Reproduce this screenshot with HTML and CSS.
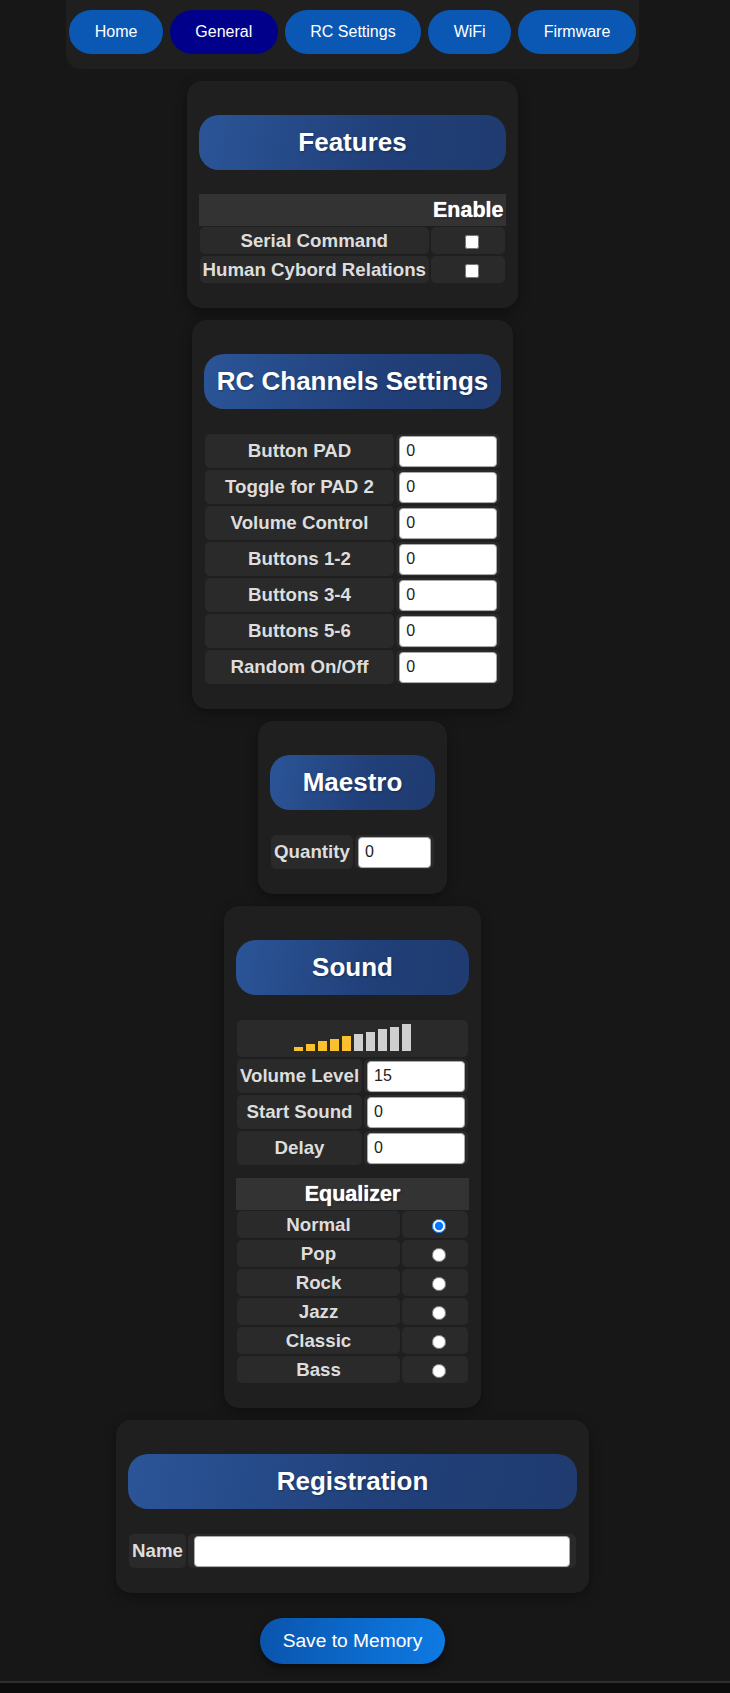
FILE: index.html
```html
<!DOCTYPE html>
<html lang="en">
<head>
<meta charset="utf-8">
<title>General</title>
<link rel="stylesheet" href="styles.css">
</head>
<body>
<div class="page">
  <nav class="nav">
    <a class="nav-btn" href="#">Home</a>
    <a class="nav-btn active" href="#">General</a>
    <a class="nav-btn" href="#">RC Settings</a>
    <a class="nav-btn" href="#">WiFi</a>
    <a class="nav-btn" href="#">Firmware</a>
  </nav>

  <section class="card">
    <h2 class="card-title">Features</h2>
    <table class="tbl">
      <tr><th></th><th>Enable</th></tr>
      <tr><td>Serial Command</td><td><input type="checkbox"></td></tr>
      <tr><td>Human Cybord Relations</td><td><input type="checkbox"></td></tr>
    </table>
  </section>

  <section class="card">
    <h2 class="card-title">RC Channels Settings</h2>
    <table class="tbl">
      <tr><td>Button PAD</td><td class="in-cell"><input class="num" type="text" value="0"></td></tr>
      <tr><td>Toggle for PAD 2</td><td class="in-cell"><input class="num" type="text" value="0"></td></tr>
      <tr><td>Volume Control</td><td class="in-cell"><input class="num" type="text" value="0"></td></tr>
      <tr><td>Buttons 1-2</td><td class="in-cell"><input class="num" type="text" value="0"></td></tr>
      <tr><td>Buttons 3-4</td><td class="in-cell"><input class="num" type="text" value="0"></td></tr>
      <tr><td>Buttons 5-6</td><td class="in-cell"><input class="num" type="text" value="0"></td></tr>
      <tr><td>Random On/Off</td><td class="in-cell"><input class="num" type="text" value="0"></td></tr>
    </table>
  </section>

  <section class="card">
    <h2 class="card-title">Maestro</h2>
    <table class="tbl">
      <tr><td>Quantity</td><td><input class="num num-sm" type="text" value="0"></td></tr>
    </table>
  </section>

  <section class="card">
    <h2 class="card-title">Sound</h2>
    <table class="tbl">
      <tr>
        <td colspan="2" class="bars-cell">
          <div class="bars">
            <span class="bar on" style="height:4px"></span>
            <span class="bar on" style="height:7px"></span>
            <span class="bar on" style="height:10px"></span>
            <span class="bar on" style="height:12px"></span>
            <span class="bar on" style="height:15px"></span>
            <span class="bar" style="height:17px"></span>
            <span class="bar" style="height:19px"></span>
            <span class="bar" style="height:22px"></span>
            <span class="bar" style="height:24px"></span>
            <span class="bar" style="height:27px"></span>
          </div>
        </td>
      </tr>
      <tr><td>Volume Level</td><td><input class="num" type="text" value="15"></td></tr>
      <tr><td>Start Sound</td><td><input class="num" type="text" value="0"></td></tr>
      <tr><td>Delay</td><td><input class="num" type="text" value="0"></td></tr>
    </table>
    <table class="tbl">
      <tr><th colspan="2">Equalizer</th></tr>
      <tr><td>Normal</td><td class="radio-cell"><input type="radio" name="eq" checked></td></tr>
      <tr><td>Pop</td><td class="radio-cell"><input type="radio" name="eq"></td></tr>
      <tr><td>Rock</td><td class="radio-cell"><input type="radio" name="eq"></td></tr>
      <tr><td>Jazz</td><td class="radio-cell"><input type="radio" name="eq"></td></tr>
      <tr><td>Classic</td><td class="radio-cell"><input type="radio" name="eq"></td></tr>
      <tr><td>Bass</td><td class="radio-cell"><input type="radio" name="eq"></td></tr>
    </table>
  </section>

  <section class="card">
    <h2 class="card-title">Registration</h2>
    <table class="tbl">
      <tr><td>Name</td><td class="wide-cell"><input class="num num-wide" type="text" value=""></td></tr>
    </table>
  </section>

  <button class="save-btn" type="button">Save to Memory</button>
</div>
<div class="footer"></div>
</body>
</html>
```

FILE: styles.css
```css
html {
  background: #0c0c0c;
}

body {
  margin: 0;
  background: #171717;
  font-family: "Liberation Sans", Arial, sans-serif;
  color: #ddd;
}

.page {
  width: 705px;
  display: flex;
  flex-direction: column;
  align-items: center;
  gap: 12px;
}

/* Navigation */
.nav {
  display: flex;
  gap: 7px;
  padding: 10px 3px 15px;
  background: #1f1f1f;
  border-radius: 0 0 15px 15px;
}

.nav-btn {
  display: block;
  padding: 13px 25.5px;
  font-size: 16px;
  line-height: 18px;
  color: #fff;
  text-decoration: none;
  background: #0a58b3;
  border-radius: 22px;
  white-space: nowrap;
}

.nav-btn.active {
  background: #00008b;
}

/* Cards */
.card {
  background: #1f1f1f;
  border-radius: 15px;
  padding: 12px;
  box-shadow: 0 4px 12px rgba(0, 0, 0, 0.35);
}

.card-title {
  margin: 22px 0 24px;
  padding: 12px 13px;
  font-size: 26px;
  line-height: 31px;
  font-weight: bold;
  color: #fff;
  text-align: center;
  white-space: nowrap;
  border-radius: 20px;
  background: linear-gradient(100deg, #2b5598 0%, #213f78 60%, #1f3b70 100%);
  text-shadow: 1px 1px 2px rgba(0, 0, 0, 0.3);
}

/* Tables */
.tbl {
  width: 100%;
  border-collapse: separate;
  border-spacing: 0;
  margin-bottom: 12px;
}

.tbl th {
  background: #333;
  padding: 3px;
  font-size: 21.5px;
  line-height: 26px;
  font-weight: bold;
  color: #fff;
  text-align: center;
  text-shadow: 0 0 1px #fff, 1px 1px 2px rgba(0, 0, 0, 0.5);
}

.tbl td {
  background: #2a2a2a;
  background-clip: padding-box;
  border: 1px solid transparent;
  border-radius: 6px;
  padding: 1.5px 3px;
  font-size: 18.72px;
  line-height: 24px;
  font-weight: bold;
  color: #ddd;
  text-align: center;
  white-space: nowrap;
  vertical-align: middle;
}

.tbl td.in-cell {
  width: 1%;
}

.tbl td.radio-cell {
  width: 60px;
}

.tbl td.wide-cell {
  padding: 1.5px 6px;
}

.num {
  box-sizing: border-box;
  width: 98px;
  height: 31px;
  margin: 0;
  padding: 0 6px;
  border: 1px solid #a9a9a9;
  border-radius: 4px;
  background: #fff;
  color: #222;
  font-family: "Liberation Sans", Arial, sans-serif;
  font-size: 16px;
  vertical-align: middle;
}

.num-sm {
  width: 73px;
}

.num-wide {
  width: 376px;
}

input[type="checkbox"],
input[type="radio"] {
  width: 14px;
  height: 14px;
  margin: 3px 3px 3px 11px;
  vertical-align: middle;
}

/* Volume bars */
.tbl td.bars-cell {
  padding: 1.5px 3px;
}

.bars {
  display: flex;
  justify-content: center;
  align-items: flex-end;
  gap: 3px;
  height: 27px;
  padding: 2px 0 5px;
}

.bar {
  display: block;
  width: 9px;
  background: #cfcfcf;
}

.bar.on {
  background: #fbc02d;
}

/* Save button */
.save-btn {
  margin-top: 13px;
  padding: 12px 23px;
  border: none;
  border-radius: 23px;
  font-family: "Liberation Sans", Arial, sans-serif;
  font-size: 19.2px;
  line-height: 22px;
  color: #fff;
  background: linear-gradient(90deg, #0a55ad 0%, #0c6ccf 60%, #0e7ae2 100%);
  box-shadow: 0 4px 10px rgba(0, 0, 0, 0.5);
  cursor: pointer;
}

.footer {
  margin-top: 17px;
  height: 12px;
  border-top: 2px solid #2e2e2e;
  background: #0c0c0c;
}
```
